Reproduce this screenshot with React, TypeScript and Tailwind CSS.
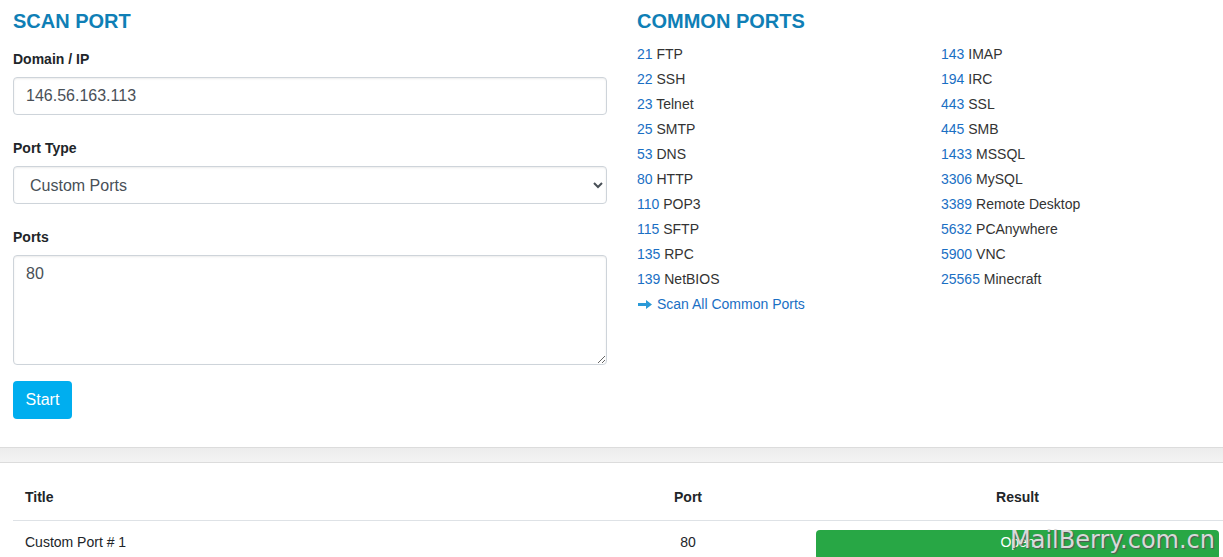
import React from 'react';

const commonPorts: [number, string][] = [
  [21, 'FTP'],
  [22, 'SSH'],
  [23, 'Telnet'],
  [25, 'SMTP'],
  [53, 'DNS'],
  [80, 'HTTP'],
  [110, 'POP3'],
  [115, 'SFTP'],
  [135, 'RPC'],
  [139, 'NetBIOS'],
];

const morePorts: [number, string][] = [
  [143, 'IMAP'],
  [194, 'IRC'],
  [443, 'SSL'],
  [445, 'SMB'],
  [1433, 'MSSQL'],
  [3306, 'MySQL'],
  [3389, 'Remote Desktop'],
  [5632, 'PCAnywhere'],
  [5900, 'VNC'],
  [25565, 'Minecraft'],
];

const fieldClass =
  'block w-full rounded-[4px] border border-[#ced4da] bg-white px-3 text-[16px] text-[#495057] shadow-[inset_0_1px_2px_rgba(0,0,0,0.08)] outline-none';

function PortLink({ port, name }: { port: number; name: string }) {
  return (
    <div className="h-[25px] leading-[25px] text-[14px]">
      <a href="#" className="text-[#1a6fc4]">{port}</a>{' '}
      <span className="text-[#333]">{name}</span>
    </div>
  );
}

export default function App() {
  return (
    <div className="relative w-full overflow-hidden bg-white font-['Liberation_Sans',Arial,sans-serif] text-[#212529]">
      <div className="flex w-[1244px] gap-[30px] px-[13px] pt-[9px]">
        {/* scan form */}
        <div className="w-[594px]">
          <h4 className="text-[20px] leading-[24px] font-bold text-[#0f7fb6]">SCAN PORT</h4>

          <div className="mt-[16px]">
            <label className="mb-[7px] block text-[14px] leading-[21px] font-bold">Domain / IP</label>
            <input type="text" defaultValue="146.56.163.113" className={`${fieldClass} h-[38px]`} />
          </div>

          <div className="mt-[23px]">
            <label className="mb-[7px] block text-[14px] leading-[21px] font-bold">Port Type</label>
            <select defaultValue="custom" className={`${fieldClass} h-[38px]`}>
              <option value="custom">Custom Ports</option>
              <option value="common">Common Ports</option>
            </select>
          </div>

          <div className="mt-[23px]">
            <label className="mb-[7px] block text-[14px] leading-[21px] font-bold">Ports</label>
            <textarea defaultValue="80" className={`${fieldClass} h-[110px] py-[6px] leading-[24px]`} />
          </div>

          <button
            type="button"
            className="mt-4 h-[38px] w-[59px] rounded-[4px] bg-[#00aeef] text-[16px] text-white"
          >
            Start
          </button>
        </div>

        {/* common ports list */}
        <div className="w-[594px]">
          <h4 className="text-[20px] leading-[24px] font-bold text-[#0f7fb6]">COMMON PORTS</h4>
          <div className="mt-[9px] grid grid-cols-[304px_1fr]">
            <div>
              {commonPorts.map(([p, n]) => (
                <PortLink key={p} port={p} name={n} />
              ))}
              <div className="flex h-[25px] items-center gap-[5px] text-[14px]">
                <svg width="14" height="9" viewBox="0 0 14 9" className="ml-[1px]">
                  <path d="M0 3h8V0l6 4.5L8 9V6H0z" fill="#2a9ad8" />
                </svg>
                <a href="#" className="text-[#1a6fc4]">Scan All Common Ports</a>
              </div>
            </div>
            <div>
              {morePorts.map(([p, n]) => (
                <PortLink key={p} port={p} name={n} />
              ))}
            </div>
          </div>
        </div>
      </div>

      <div className="mt-[28px] h-[16px] border-y border-[#dcdcdc] bg-[linear-gradient(#ececec,#f3f3f3)]" />

      <div className="w-[1244px] px-[13px] pt-[12px]">
        <table className="w-full border-collapse text-[14px]">
          <thead>
            <tr className="border-b border-[#dee2e6]">
              <th className="w-[559px] px-3 py-3 text-left leading-[21px] font-bold">Title</th>
              <th className="w-[232px] px-3 py-3 text-center leading-[21px] font-bold">Port</th>
              <th className="px-3 py-3 text-center leading-[21px] font-bold">Result</th>
            </tr>
          </thead>
          <tbody>
            <tr>
              <td className="px-3 pt-[11px] pb-3 align-top leading-[21px]">Custom Port # 1</td>
              <td className="px-3 pt-[11px] pb-3 text-center align-top leading-[21px]">80</td>
              <td className="px-3 pt-[9px] pb-3 align-top">
                <div className="h-[30px] rounded-[4px] bg-[#28a745] text-center text-[14px] leading-[24px] text-white">
                  Open
                </div>
              </td>
            </tr>
          </tbody>
        </table>
      </div>

      <div className="pointer-events-none absolute top-[528px] left-[1010px] font-['DejaVu_Sans',sans-serif] text-[24px] leading-[24px] text-[#d9d9d9] [text-shadow:1px_1px_1px_#555]">
        MailBerry.com.cn
      </div>
    </div>
  );
}
